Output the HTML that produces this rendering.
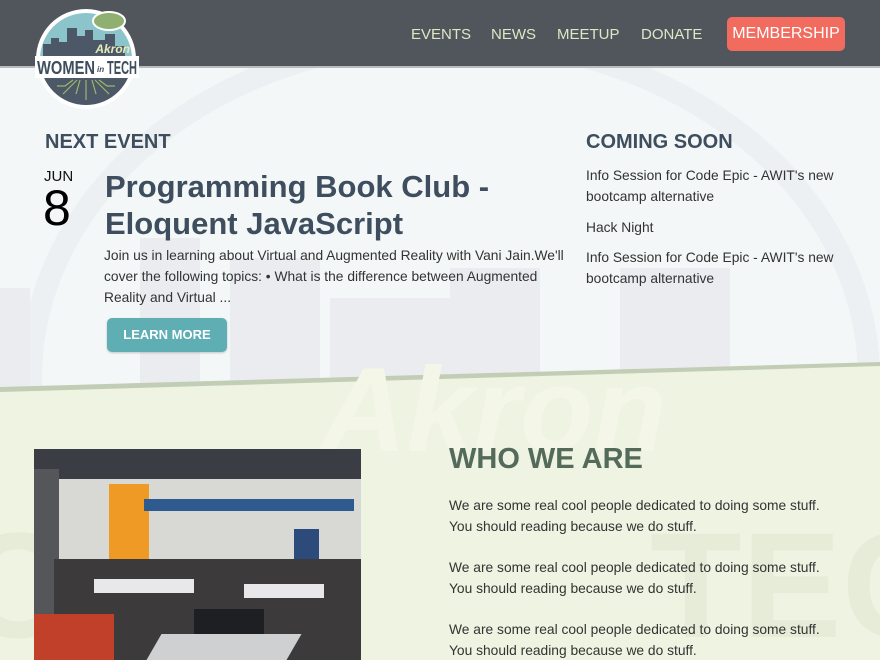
<!DOCTYPE html>
<html><head><meta charset="utf-8">
<style>
*{margin:0;padding:0;box-sizing:border-box}
html,body{width:880px;height:660px;overflow:hidden}
body{font-family:"Liberation Sans",sans-serif;background:#f3f7f7;position:relative}
.wrap{position:absolute;left:0;top:0;width:880px;height:660px;overflow:hidden}
.hdr{position:absolute;left:0;top:0;width:880px;height:68px;background:#50565c;border-bottom:2px solid #b9bcbd}
.nav{position:absolute;top:26px;color:#dfe6c4;font-size:15px;line-height:17px}
.mem{position:absolute;left:727px;top:17px;width:118px;height:34px;background:#f26b5f;color:#fff;font-size:16px;border-radius:5px;text-align:center;line-height:34px}
.bgtop{position:absolute;left:0;top:68px;width:880px;height:330px;overflow:hidden}
.blk{position:absolute;background:#eaecef}
.green{position:absolute;left:0;top:0;width:880px;height:660px;background:#eff3e2;clip-path:polygon(0 390px,880px 365px,880px 660px,0 660px)}
.gline{position:absolute;left:0;top:0;width:880px;height:660px;background:#c2cdb5;clip-path:polygon(0 387px,880px 362px,880px 366px,0 392px)}
h2{position:absolute;font-size:20px;font-weight:bold;color:#3e4e5e}
.t{position:absolute;color:#3d4a56;white-space:nowrap}
.wm{position:absolute;font-weight:bold;font-style:italic;color:#f6f8ea;font-size:130px;white-space:nowrap;line-height:1}
</style></head><body><div class="wrap">
<div class="bgtop">
 <div class="blk" style="left:0;top:220px;width:30px;height:120px"></div>
 <div class="blk" style="left:140px;top:170px;width:60px;height:170px"></div>
 <div class="blk" style="left:230px;top:190px;width:90px;height:150px"></div>
 <div class="blk" style="left:330px;top:230px;width:120px;height:110px"></div>
 <div class="blk" style="left:450px;top:200px;width:90px;height:140px"></div>
 <div class="blk" style="left:620px;top:200px;width:110px;height:140px"></div>
 <div style="position:absolute;left:20px;top:-40px;width:860px;height:700px;border:22px solid #eaecef;border-radius:50%;opacity:.7"></div>
</div>
<div class="green"></div>
<div class="gline"></div>
<div class="wm" style="left:320px;top:350px;font-size:120px;color:#f4f7e8">Akron</div>
<div class="wm" style="left:650px;top:510px;color:#e7ecd8;font-style:normal;font-size:150px">TECH</div>
<div class="wm" style="left:-40px;top:510px;color:#e7ecd8;font-style:normal;font-size:150px">O</div>

<div class="hdr"></div>
<div class="nav" style="left:411px">EVENTS</div>
<div class="nav" style="left:491px">NEWS</div>
<div class="nav" style="left:557px">MEETUP</div>
<div class="nav" style="left:641px">DONATE</div>
<div class="mem">MEMBERSHIP</div>
<svg style="position:absolute;left:33px;top:6px" width="108" height="104" viewBox="0 0 108 104">
 <circle cx="53" cy="53" r="50" fill="#fff"/>
 <circle cx="53" cy="53" r="46" fill="#8cc4cc"/>
 <path d="M7 53 A46 46 0 0 0 99 53 Z" fill="#4c5868"/>
 <path d="M10 53 L10 38 L18 38 L18 32 L26 32 L26 36 L34 36 L34 22 L44 22 L44 30 L52 30 L52 24 L60 24 L60 34 L72 34 L72 28 L82 28 L82 40 L92 40 L92 53 Z" fill="#4c5868"/>
 <ellipse cx="76" cy="15" rx="16" ry="9" fill="#8fb070" stroke="#fff" stroke-width="2"/>
 <rect x="2" y="50" width="104" height="22" fill="#fff"/>
 <text x="97" y="47" font-size="12" font-weight="bold" font-style="italic" fill="#e4ecb8" text-anchor="end" font-family="Liberation Sans">Akron</text>
 <text x="4" y="68" font-size="18" font-weight="bold" fill="#3e4e5e" font-family="Liberation Sans" textLength="58" lengthAdjust="spacingAndGlyphs">WOMEN</text>
 <text x="64" y="66" font-size="8" font-style="italic" font-weight="bold" fill="#3e4e5e" font-family="Liberation Sans">in</text>
 <text x="74" y="68" font-size="18" font-weight="bold" fill="#3e4e5e" font-family="Liberation Sans" textLength="30" lengthAdjust="spacingAndGlyphs">TECH</text>
 <g stroke="#9ab86c" stroke-width="1.2" fill="none"><path d="M53 74v20M47 74l-4 14M59 74l4 14M40 74l-8 6h-8M66 74l8 6h8M44 74l-14 14M62 74l14 14"/></g>
</svg>

<h2 style="left:45px;top:131px">NEXT EVENT</h2>
<div class="t" style="left:44px;top:168px;font-size:15px;color:#111">JUN</div>
<div class="t" style="left:43px;top:180px;font-size:50px;color:#000;line-height:56px">8</div>
<div class="t" style="left:105px;top:168px;font-size:31px;font-weight:bold;line-height:37px;color:#3e4e5e">Programming Book Club -<br>Eloquent JavaScript</div>
<div class="t" style="left:104px;top:245px;font-size:13.8px;line-height:21px;color:#333">Join us in learning about Virtual and Augmented Reality with Vani Jain.We'll<br>cover the following topics: • What is the difference between Augmented<br>Reality and Virtual ...</div>
<div style="position:absolute;left:107px;top:318px;width:120px;height:34px;background:#5eaeb4;border-radius:5px;color:#fff;font-weight:bold;font-size:13px;text-align:center;line-height:34px;box-shadow:0 1px 2px rgba(0,0,0,.2)">LEARN MORE</div>

<h2 style="left:586px;top:131px">COMING SOON</h2>
<div class="t" style="left:586px;top:165px;font-size:13.8px;line-height:21px;color:#333">Info Session for Code Epic - AWIT's new<br>bootcamp alternative</div>
<div class="t" style="left:586px;top:217px;font-size:13.8px;line-height:21px;color:#333">Hack Night</div>
<div class="t" style="left:586px;top:247px;font-size:13.8px;line-height:21px;color:#333">Info Session for Code Epic - AWIT's new<br>bootcamp alternative</div>

<div style="position:absolute;left:34px;top:449px;width:327px;height:211px;background:#d8d8d4;overflow:hidden">
 <div style="position:absolute;left:0;top:0;width:327px;height:30px;background:#3a3d44"></div>
 <div style="position:absolute;left:0;top:20px;width:25px;height:191px;background:#55565a"></div>
 <div style="position:absolute;left:75px;top:35px;width:40px;height:110px;background:#f09a26"></div>
 <div style="position:absolute;left:110px;top:50px;width:210px;height:12px;background:#2f5a90"></div>
 <div style="position:absolute;left:260px;top:80px;width:25px;height:70px;background:#2c4a7a"></div>
 <div style="position:absolute;left:20px;top:110px;width:307px;height:101px;background:#3d3a3c"></div>
 <div style="position:absolute;left:60px;top:130px;width:100px;height:14px;background:#e8e8ea"></div>
 <div style="position:absolute;left:210px;top:135px;width:80px;height:14px;background:#e8e8ea"></div>
 <div style="position:absolute;left:0;top:165px;width:80px;height:46px;background:#c0402a"></div>
 <div style="position:absolute;left:160px;top:160px;width:70px;height:51px;background:#1e1f22"></div>
 <div style="position:absolute;left:120px;top:185px;width:140px;height:26px;background:#cfd0d2;transform:skewX(-30deg)"></div>
</div>

<div class="t" style="left:449px;top:443px;font-size:29px;font-weight:bold;color:#546a5a">WHO WE ARE</div>
<div class="t" style="left:449px;top:495px;font-size:13.8px;line-height:21px;color:#333">We are some real cool people dedicated to doing some stuff.<br>You should reading because we do stuff.</div>
<div class="t" style="left:449px;top:557px;font-size:13.8px;line-height:21px;color:#333">We are some real cool people dedicated to doing some stuff.<br>You should reading because we do stuff.</div>
<div class="t" style="left:449px;top:619px;font-size:13.8px;line-height:21px;color:#333">We are some real cool people dedicated to doing some stuff.<br>You should reading because we do stuff.</div>
</div></body></html>
